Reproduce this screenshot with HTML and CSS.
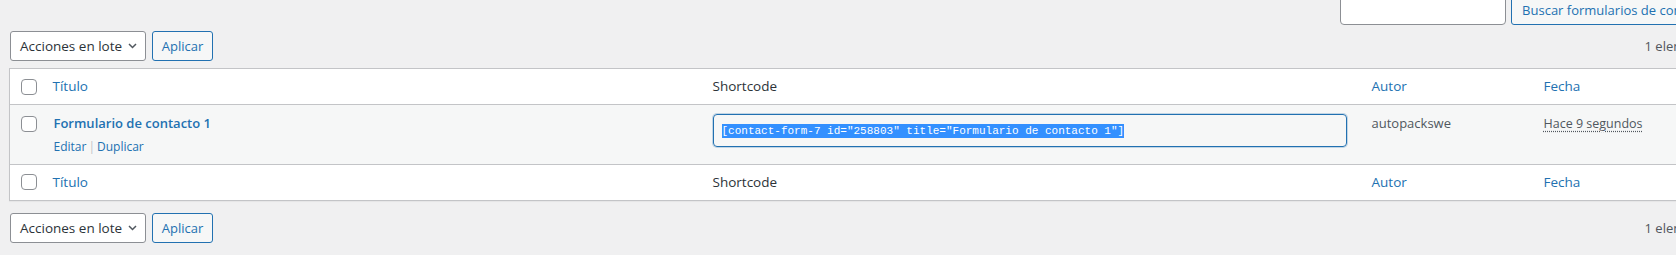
FILE: index.html
```html
<!DOCTYPE html>
<html>

<head>
  <title>Formularios de contacto</title>
  <link rel="stylesheet" href="styles.css">
</head>

<body>
  <div class="wrap">
    <div class="search-box">
      <input class="search-input" type="search">
      <button class="button">Buscar formularios de contacto</button>
    </div>

    <div class="tablenav top">
      <div class="bulk-actions">
        <div class="bulk-select">
          <span>Acciones en lote</span>
          <svg width="9" height="6" viewBox="0 0 9 6"><path d="M1 1l3.5 3.5L8 1" fill="none" stroke="#50575e" stroke-width="1.5"/></svg>
        </div>
        <button class="button apply">Aplicar</button>
      </div>
      <div class="displaying-num">1 elemento</div>
    </div>

    <table class="list-table">
      <colgroup>
        <col class="col-cb">
        <col class="col-title">
        <col class="col-shortcode">
        <col class="col-author">
        <col class="col-date">
      </colgroup>
      <thead>
        <tr>
          <td class="check-column"><input type="checkbox" class="cb"></td>
          <th class="title-head"><a href="#">Título</a></th>
          <th>Shortcode</th>
          <th><a href="#">Autor</a></th>
          <th><a href="#">Fecha</a></th>
        </tr>
      </thead>
      <tbody>
        <tr>
          <th class="check-column"><input type="checkbox" class="cb"></th>
          <td class="title-cell">
            <a class="row-title" href="#">Formulario de contacto 1</a>
            <div class="row-actions">
              <a href="#">Editar</a><span class="sep">|</span><a href="#">Duplicar</a>
            </div>
          </td>
          <td class="shortcode-cell">
            <div class="shortcode-field"><span class="selected">[contact-form-7 id="258803" title="Formulario de contacto 1"]</span></div>
          </td>
          <td class="author">autopackswe</td>
          <td><abbr title="Hace 9 segundos">Hace 9 segundos</abbr></td>
        </tr>
      </tbody>
      <tfoot>
        <tr>
          <td class="check-column"><input type="checkbox" class="cb"></td>
          <th class="title-head"><a href="#">Título</a></th>
          <th>Shortcode</th>
          <th><a href="#">Autor</a></th>
          <th><a href="#">Fecha</a></th>
        </tr>
      </tfoot>
    </table>

    <div class="tablenav bottom">
      <div class="bulk-actions">
        <div class="bulk-select">
          <span>Acciones en lote</span>
          <svg width="9" height="6" viewBox="0 0 9 6"><path d="M1 1l3.5 3.5L8 1" fill="none" stroke="#50575e" stroke-width="1.5"/></svg>
        </div>
        <button class="button apply">Aplicar</button>
      </div>
      <div class="displaying-num">1 elemento</div>
    </div>
  </div>
</body>

</html>
```

FILE: styles.css
```css
* {
  box-sizing: border-box;
  margin: 0;
  padding: 0;
}

body {
  font-family: 'Open Sans', sans-serif;
  font-size: 12.5px;
  background-color: #f0f0f1;
  color: #3c434a;
  overflow: hidden;
}

a {
  color: #2271b1;
  text-decoration: none;
}

.wrap {
  width: 1714px;
  margin-left: 9px;
}

/* search */
.search-box {
  display: flex;
  justify-content: flex-end;
  gap: 5px;
  height: 30px;
  margin-top: -5px;
}

.search-input {
  width: 166px;
  height: 30px;
  border: 1px solid #8c8f94;
  border-radius: 4px;
  background-color: #ffffff;
}

.button {
  font-family: inherit;
  font-size: 13px;
  height: 30px;
  padding: 0 10px;
  color: #2271b1;
  background-color: #f6f7f7;
  border: 1px solid #2271b1;
  border-radius: 3px;
}

.button.apply {
  width: 61px;
  padding: 0;
}

/* tablenav */
.tablenav {
  display: flex;
  justify-content: space-between;
  align-items: center;
  height: 30px;
}

.tablenav.top {
  margin: 6px 0 7px;
}

.tablenav.bottom {
  margin-top: 12px;
}

.bulk-actions {
  display: flex;
  gap: 6px;
  margin-left: 1px;
}

.bulk-select {
  display: flex;
  align-items: center;
  justify-content: space-between;
  width: 136px;
  height: 30px;
  padding: 0 8px 0 9px;
  font-size: 13.5px;
  color: #2c3338;
  background-color: #ffffff;
  border: 1px solid #8c8f94;
  border-radius: 3px;
}

.displaying-num {
  margin-right: 10px;
  font-size: 13px;
  color: #50575e;
}

/* table */
.list-table {
  width: 100%;
  table-layout: fixed;
  border-collapse: collapse;
  background-color: #ffffff;
  border: 1px solid #c3c4c7;
  box-shadow: 0 1px 1px rgba(0, 0, 0, 0.04);
}

.col-cb {
  width: 32px;
}

.col-title {
  width: 661px;
}

.col-shortcode {
  width: 659px;
}

.col-author {
  width: 172px;
}

th,
td {
  text-align: left;
  vertical-align: top;
  padding: 8px 10px;
  line-height: 19px;
  font-weight: 400;
}

thead th,
tfoot th {
  font-size: 13.5px;
  color: #2c3338;
}

.title-head {
  padding-left: 11px;
}

thead tr {
  border-bottom: 1px solid #c3c4c7;
}

tfoot tr {
  border-top: 1px solid #c3c4c7;
}

tbody tr {
  background-color: #f6f7f7;
}

tbody td {
  color: #50575e;
  padding-top: 9px;
}

.author {
  font-size: 13px;
}

.check-column {
  padding: 10px 0 0 11px;
}

tbody .check-column {
  padding-top: 11px;
}

tfoot .check-column {
  padding-top: 9px;
}

.cb {
  appearance: none;
  display: block;
  width: 16px;
  height: 16px;
  background-color: #ffffff;
  border: 1px solid #8c8f94;
  border-radius: 4px;
}

.row-title {
  font-size: 13px;
  font-weight: 600;
  margin-left: 2px;
}

.row-actions {
  margin-top: 4px;
  margin-left: 2px;
  font-size: 12px;
}

.row-actions .sep {
  color: #c3c4c7;
  margin: 0 2px;
}

.shortcode-cell {
  padding-top: 9px;
}

.shortcode-field {
  width: 634px;
  height: 33px;
  display: flex;
  align-items: center;
  padding: 0 8px;
  border: 1px solid #2271b1;
  border-radius: 4px;
  box-shadow: 0 0 0 1px rgba(34, 113, 177, 0.25);
  font-family: 'Liberation Mono', monospace;
  font-size: 11px;
}

.selected {
  background-color: #3390ff;
  color: #ffffff;
  line-height: 14px;
  white-space: nowrap;
}

abbr {
  text-decoration: underline dotted;
  text-underline-offset: 3px;
}
```
